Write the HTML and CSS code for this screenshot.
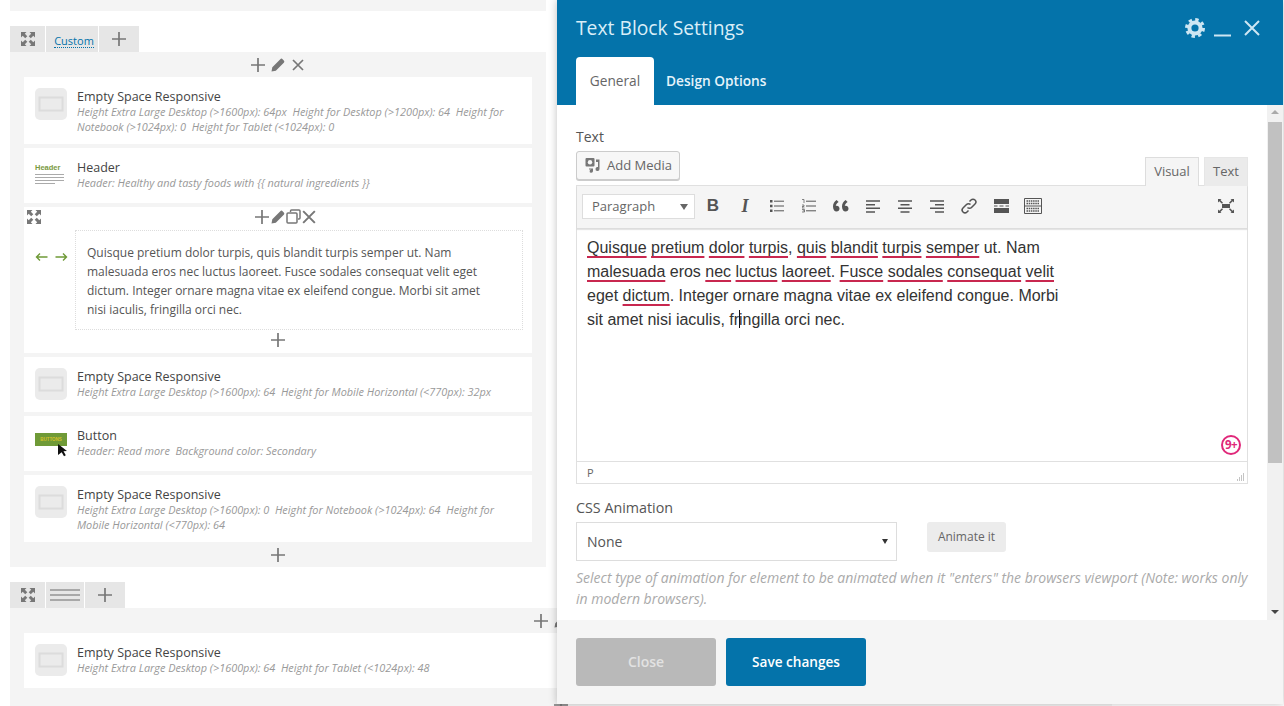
FILE: index.html
```html
<!DOCTYPE html>
<html lang="en">
<head>
<meta charset="utf-8">
<title>Text Block Settings</title>
<link rel="stylesheet" href="styles.css">
</head>
<body>
<svg class="defs" width="0" height="0" aria-hidden="true">
  <defs>
    <symbol id="expand" viewBox="0 0 14 14">
      <path d="M0 0h5.500L3.800 1.700 6.300 4.200 4.200 6.300 1.700 3.800 0 5.500zM14 0v5.500l-1.700-1.700-2.500 2.500-2.100-2.100 2.500-2.500L8.500 0zM0 14V8.500l1.700 1.700 2.500-2.500 2.100 2.100-2.500 2.500L5.500 14zM14 14H8.500l1.700-1.700-2.500-2.500 2.100-2.100 2.500 2.500L14 8.500z" fill="currentColor"/>
    </symbol>
    <symbol id="plus" viewBox="0 0 16 16">
      <path d="M8 1v14M1 8h14" stroke="currentColor" stroke-width="1.700" fill="none"/>
    </symbol>
    <symbol id="pencil" viewBox="0 0 14 14">
      <path d="M.5 13.500l.8-4.300L9.300 1.200a1.600 1.600 0 0 1 2.300 0l1.200 1.200a1.600 1.600 0 0 1 0 2.300L4.800 12.700z" fill="currentColor"/>
    </symbol>
    <symbol id="cross" viewBox="0 0 12 12">
      <path d="M1 1l10 10M11 1L1 11" stroke="currentColor" stroke-width="1.700" fill="none"/>
    </symbol>
    <symbol id="clone" viewBox="0 0 15 15">
      <path d="M4.500 3V2a1 1 0 0 1 1-1h7.500a1 1 0 0 1 1 1v7a1 1 0 0 1-1 1h-1M2 4h8a1 1 0 0 1 1 1v8a1 1 0 0 1-1 1H2a1 1 0 0 1-1-1V5a1 1 0 0 1 1-1z" stroke="currentColor" stroke-width="1.500" fill="none"/>
    </symbol>
    <symbol id="empty" viewBox="0 0 32 32">
      <rect width="32" height="32" rx="5" fill="#ebebeb"/>
      <rect x="4.500" y="9.500" width="23" height="13" fill="none" stroke="#dcdcdc" stroke-width="2"/>
    </symbol>
  </defs>
</svg>

<main class="builder">
  <div class="strip"></div>

  <section class="row-block">
    <div class="tabs">
      <span class="tab tab-icon"><svg class="ico14"><use href="#expand"/></svg></span>
      <span class="tab tab-custom"><span class="custom-link">Custom</span></span>
      <span class="tab tab-plus"><svg class="ico16"><use href="#plus"/></svg></span>
    </div>
    <div class="panel">
      <div class="controls">
        <svg class="ico16"><use href="#plus"/></svg>
        <svg class="ico14"><use href="#pencil"/></svg>
        <svg class="ico12"><use href="#cross"/></svg>
      </div>

      <article class="card card-tall">
        <svg class="thumb"><use href="#empty"/></svg>
        <div class="info">
          <h3>Empty Space Responsive</h3>
          <p>Height Extra Large Desktop (&gt;1600px): 64px&nbsp; Height for Desktop (&gt;1200px): 64&nbsp; Height for Notebook (&gt;1024px): 0&nbsp; Height for Tablet (&lt;1024px): 0</p>
        </div>
      </article>

      <article class="card card-short">
        <div class="thumb thumb-header">
          <span>Header</span><i></i><i></i><i></i><i></i>
        </div>
        <div class="info">
          <h3>Header</h3>
          <p>Header: Healthy and tasty foods with {{ natural ingredients }}</p>
        </div>
      </article>

      <article class="active-card">
        <div class="active-top">
          <svg class="ico14 expand-active"><use href="#expand"/></svg>
          <div class="active-tools">
            <svg class="ico16"><use href="#plus"/></svg>
            <svg class="ico14"><use href="#pencil"/></svg>
            <svg class="ico15"><use href="#clone"/></svg>
            <svg class="ico14"><use href="#cross"/></svg>
          </div>
        </div>
        <div class="active-body">
          <div class="arrows">
            <svg width="13" height="10" viewBox="0 0 13 10"><path d="M12.500 5H1.500M5 1.500L1.500 5 5 8.500" stroke="#6f9a37" stroke-width="1.400" fill="none"/></svg>
            <svg width="13" height="10" viewBox="0 0 13 10"><path d="M.5 5h11M8 1.500L11.500 5 8 8.500" stroke="#6f9a37" stroke-width="1.400" fill="none"/></svg>
          </div>
          <div class="active-text">Quisque pretium dolor turpis, quis blandit turpis semper ut. Nam malesuada eros nec luctus laoreet. Fusce sodales consequat velit eget dictum. Integer ornare magna vitae ex eleifend congue. Morbi sit amet nisi iaculis, fringilla orci nec.</div>
        </div>
        <div class="active-add"><svg class="ico16"><use href="#plus"/></svg></div>
      </article>

      <article class="card card-short">
        <svg class="thumb"><use href="#empty"/></svg>
        <div class="info">
          <h3>Empty Space Responsive</h3>
          <p>Height Extra Large Desktop (&gt;1600px): 64&nbsp; Height for Mobile Horizontal (&lt;770px): 32px</p>
        </div>
      </article>

      <article class="card card-short">
        <div class="thumb thumb-button">
          <span class="btn-pic">BUTTONS</span>
          <svg class="cursor" width="11" height="13" viewBox="0 0 11 13"><path d="M1 0l9 7-3.500.3 2.300 4-1.800 1-2.300-4L1 11z" fill="#111"/></svg>
        </div>
        <div class="info">
          <h3>Button</h3>
          <p>Header: Read more&nbsp; Background color: Secondary</p>
        </div>
      </article>

      <article class="card card-tall last-card">
        <svg class="thumb"><use href="#empty"/></svg>
        <div class="info">
          <h3>Empty Space Responsive</h3>
          <p>Height Extra Large Desktop (&gt;1600px): 0&nbsp; Height for Notebook (&gt;1024px): 64&nbsp; Height for Mobile Horizontal (&lt;770px): 64</p>
        </div>
      </article>

      <div class="panel-add"><svg class="ico16"><use href="#plus"/></svg></div>
    </div>
  </section>

  <section class="row-block row-wide">
    <div class="tabs">
      <span class="tab tab-icon"><svg class="ico14"><use href="#expand"/></svg></span>
      <span class="tab tab-lines"><i></i><i></i><i></i></span>
      <span class="tab tab-plus"><svg class="ico16"><use href="#plus"/></svg></span>
    </div>
    <div class="panel">
      <div class="controls">
        <svg class="ico16"><use href="#plus"/></svg>
        <svg class="ico14"><use href="#pencil"/></svg>
        <svg class="ico12"><use href="#cross"/></svg>
      </div>
      <article class="card card-short">
        <svg class="thumb"><use href="#empty"/></svg>
        <div class="info">
          <h3>Empty Space Responsive</h3>
          <p>Height Extra Large Desktop (&gt;1600px): 64&nbsp; Height for Tablet (&lt;1024px): 48</p>
        </div>
      </article>
      <div class="panel-add"><svg class="ico16"><use href="#plus"/></svg></div>
    </div>
  </section>
</main>

<aside class="modal">
  <header class="modal-head">
    <div class="title-row">
      <h1>Text Block Settings</h1>
      <div class="head-icons">
        <svg width="22" height="22" viewBox="0 0 22 22"><circle cx="11" cy="11" r="5.600" fill="none" stroke="#cde6f3" stroke-width="4"/><circle cx="11" cy="11" r="8.500" fill="none" stroke="#cde6f3" stroke-width="3" stroke-dasharray="3.400 3.270"/></svg>
        <svg width="17" height="22" viewBox="0 0 17 22"><path d="M0 18.500h17" stroke="#cde6f3" stroke-width="2"/></svg>
        <svg class="head-close" width="16" height="22" viewBox="0 0 16 22"><path d="M1 4l14 14M15 4L1 18" stroke="#cde6f3" stroke-width="2"/></svg>
      </div>
    </div>
    <nav class="modal-tabs">
      <span class="mtab mtab-on">General</span>
      <span class="mtab">Design Options</span>
    </nav>
  </header>

  <div class="modal-body">
    <div class="form">
      <label class="field-label">Text</label>
      <div class="media-row">
        <span class="media-btn">
          <svg width="16" height="16" viewBox="0 0 16 16"><path d="M1.500 1h7a1 1 0 0 1 1 1v6.500a1 1 0 0 1-1 1h-7a1 1 0 0 1-1-1V2a1 1 0 0 1 1-1z" fill="#777"/><circle cx="5" cy="5.200" r="2.200" fill="#f7f7f7"/><path d="M11 2.500h3.500v9.500a2 2 0 1 1-1.500-1.900V5H11zM4 11.500h4v2.600a1.700 1.700 0 1 1-1.400-1.600V12.500H4z" fill="#777"/></svg>
          Add Media
        </span>
        <div class="editor-tabs">
          <span class="etab etab-on">Visual</span>
          <span class="etab">Text</span>
        </div>
      </div>
      <div class="editor">
        <div class="toolbar">
          <span class="format">Paragraph<b class="caret-down"></b></span>
          <span class="tool tool-b">B</span>
          <span class="tool tool-i">I</span>
          <span class="tool"><svg width="14" height="14" viewBox="0 0 14 14"><path d="M0 1h2.500v2.500H0zM0 5.800h2.500v2.500H0zM0 10.500h2.500V13H0z" fill="#555"/><path d="M4 2.200h10M4 7h10M4 11.800h10" stroke="#555" stroke-width="1"/></svg></span>
          <span class="tool"><svg width="14" height="14" viewBox="0 0 14 14"><path d="M0 .5h2v3.500M0 6h2v1.500H0V9h2.500M0 10.500h2.500V13H0M.8 11.800h1.700" stroke="#555" stroke-width=".7" fill="none"/><path d="M4 2.200h10M4 7h10M4 11.800h10" stroke="#555" stroke-width="1"/></svg></span>
          <span class="tool"><svg width="16" height="12" viewBox="0 0 16 12"><path d="M3.600 0C1.400 1.400 0 3.600 0 6.500 0 9.600 1.500 11.500 3.500 11.500c1.800 0 3-1.300 3-3s-1.200-2.800-2.800-2.800c-.4 0-.7.100-.9.200.2-1.700 1.300-3 2.800-4zM12.600 0C10.400 1.400 9 3.600 9 6.500c0 3.100 1.500 5 3.500 5 1.800 0 3-1.300 3-3s-1.200-2.800-2.800-2.800c-.4 0-.7.100-.9.200.2-1.700 1.300-3 2.800-4z" fill="#555"/></svg></span>
          <span class="tool"><svg width="14" height="13" viewBox="0 0 14 13"><path d="M0 1h14M0 4.700h9M0 8.300h14M0 12h9" stroke="#555" stroke-width="1.400"/></svg></span>
          <span class="tool"><svg width="14" height="13" viewBox="0 0 14 13"><path d="M0 1h14M2.500 4.700h9M0 8.300h14M2.500 12h9" stroke="#555" stroke-width="1.400"/></svg></span>
          <span class="tool"><svg width="14" height="13" viewBox="0 0 14 13"><path d="M0 1h14M5 4.700h9M0 8.300h14M5 12h9" stroke="#555" stroke-width="1.400"/></svg></span>
          <span class="tool"><svg width="16" height="16" viewBox="0 0 16 16"><path d="M6.500 9.500a2.800 2.800 0 0 0 4 0l3.500-3.500a2.800 2.800 0 0 0-4-4L8.500 3.500M9.500 6.500a2.800 2.800 0 0 0-4 0L2 10a2.800 2.800 0 0 0 4 4l1.500-1.500" stroke="#555" stroke-width="1.500" fill="none"/></svg></span>
          <span class="tool"><svg width="15" height="14" viewBox="0 0 15 14"><path d="M0 0h15v5H0zM0 9h15v5H0z" fill="#555"/><path d="M0 7h3.500M5.500 7h4M11.500 7H15" stroke="#555" stroke-width="1.200"/></svg></span>
          <span class="tool"><svg width="18" height="16" viewBox="0 0 18 16"><path d="M.5.5h17v15H.5zM.5 8h17" stroke="#555" fill="none"/><path d="M2.500 3h13M2.500 5.500h13M2.500 10.500h13M2.500 13h13" stroke="#555" stroke-width="1.300" stroke-dasharray="1.500 .7"/></svg></span>
          <span class="tool tool-full"><svg width="16" height="14" viewBox="0 0 16 14"><path d="M4 5h8v4H4z" fill="#555"/><path d="M0 0h3.500L2.400 1.100 5 3.800 4 4.800 1.300 2.200 0 3.500zM16 0v3.500l-1.300-1.300L12 4.800l-1-1 2.600-2.700L12.500 0zM0 14v-3.500l1.300 1.300L4 9.200l1 1-2.600 2.700L3.500 14zM16 14h-3.500l1.100-1.100L11 10.200l1-1 2.700 2.600 1.300-1.300z" fill="#555"/></svg></span>
        </div>
        <div class="editor-area">
          <div class="editor-text"><span class="sp">Quisque</span> <span class="sp">pretium</span> <span class="sp">dolor</span> <span class="sp">turpis</span>, <span class="sp">quis</span> <span class="sp">blandit</span> <span class="sp">turpis</span> <span class="sp">semper</span> ut. Nam <span class="sp">malesuada</span> eros <span class="sp">nec</span> <span class="sp">luctus</span> <span class="sp">laoreet</span>. <span class="sp">Fusce</span> <span class="sp">sodales</span> <span class="sp">consequat</span> <span class="sp">velit</span> eget <span class="sp">dictum</span>. Integer ornare magna vitae ex eleifend congue. Morbi sit amet nisi iaculis, fr<span class="text-caret"></span>ingilla orci nec.</div>
          <span class="badge">9+</span>
        </div>
        <div class="statusbar">
          <span>p</span>
          <svg width="10" height="10" viewBox="0 0 10 10"><path d="M8.500 1.500v7M6.500 3.500v5M4.500 5.500v3M2.500 7.500v1" stroke="#888" stroke-width="1" stroke-dasharray="1 1" fill="none"/></svg>
        </div>
      </div>

      <label class="field-label label-anim">CSS Animation</label>
      <div class="anim-row">
        <span class="anim-select">None<b class="caret-down caret-dark"></b></span>
        <span class="anim-btn">Animate it</span>
      </div>
      <p class="help">Select type of animation for element to be animated when it "enters" the browsers viewport (Note: works only in modern browsers).</p>
    </div>
    <div class="scrollbar">
      <b class="sb-up"></b>
      <span class="sb-thumb"></span>
      <b class="sb-down"></b>
    </div>
  </div>

  <footer class="modal-foot">
    <span class="btn btn-close">Close</span>
    <span class="btn btn-save">Save changes</span>
  </footer>
</aside>
</body>
</html>
```
FILE: styles.css
```css
* { box-sizing: border-box; }
html, body { margin: 0; height: 706px; overflow: hidden; background: #fff; }
body { font-family: "Open Sans", sans-serif; color: #444; }
.defs { position: absolute; }
svg { display: block; flex: none; }
.ico12 { width: 12px; height: 12px; }
.ico14 { width: 14px; height: 14px; }
.ico15 { width: 15px; height: 15px; }
.ico16 { width: 16px; height: 16px; }

/* builder */
.builder { padding-left: 10px; width: 1284px; color: #777; }
.strip { width: 536px; height: 11px; background: #f4f4f4; margin-bottom: 15px; }
.row-block { width: 536px; margin-bottom: 15px; }
.row-wide { width: 1102px; }
.tabs { display: flex; gap: 1px; height: 26px; }
.tab { display: flex; align-items: center; justify-content: center; background: #e6e6e6; color: #777; }
.tab-icon { width: 35px; }
.tab-custom { width: 52px; padding-left: 4px; }
.tab-plus { width: 40px; }
.tab-lines { width: 38px; flex-direction: column; gap: 3px; }
.tab-lines i { display: block; width: 30px; height: 2px; background: #a8a8a8; }
.custom-link { font-size: 11px; color: #0473aa; border-bottom: 1px dotted #0473aa; line-height: 13px; margin-top: 3px; }
.panel { background: #f4f4f4; padding: 0 14px; }
.controls { height: 25px; display: flex; align-items: center; justify-content: center; gap: 5px; padding-right: 2px; color: #777; }
.controls .ico12 { margin-left: 2px; }
.card { display: flex; align-items: flex-start; background: #fff; padding: 11px 11px 0; margin-bottom: 4px; }
.card-tall { height: 67px; }
.card-short { height: 55px; }
.thumb { width: 32px; height: 32px; margin-right: 10px; flex: none; }
.info { flex: 1; min-width: 0; }
.info h3 { margin: 0; height: 16px; font-size: 12.500px; line-height: 17px; font-weight: 500; color: #444; }
.info p { margin: 0; font-size: 10.900px; line-height: 15px; font-style: italic; color: #999; }
.thumb-header { padding-top: 5px; }
.thumb-header span { display: block; font: bold 7.500px/8px "Liberation Sans", sans-serif; color: #7a9a3f; margin-bottom: 1px; }
.thumb-header i { display: block; width: 29px; height: 1px; background: #aaa; margin-top: 2px; }
.thumb-header i:last-child { width: 20px; }
.thumb-button { position: relative; padding-top: 6px; }
.btn-pic { display: block; height: 13px; background: #6f9a37; color: #d4c22a; font: bold 4.500px/13px "Liberation Sans", sans-serif; text-align: center; }
.cursor { position: absolute; left: 22px; top: 17px; }
.active-card { background: #fff; margin-bottom: 4px; height: 146px; padding-left: 3px; }
.active-top { height: 23px; padding: 0 0 4px 10px; position: relative; display: flex; justify-content: center; align-items: center; }
.expand-active { position: absolute; left: 0; top: 3px; }
.active-tools { display: flex; gap: 1px; align-items: center; color: #777; }
.active-body { display: flex; align-items: flex-start; }
.arrows { width: 48px; display: flex; justify-content: center; gap: 7px; padding: 22px 0 0 0; flex: none; }
.active-text { width: 448px; height: 100px; padding: 12px 21px 12px 11px; border: 1px dotted #ddd; font-size: 12px; line-height: 19px; color: #555; }
.active-add { display: flex; justify-content: center; margin-left: -3px; padding-top: 2px; color: #777; }
.last-card { margin-bottom: 0; }
.panel-add { display: flex; justify-content: center; height: 25px; align-items: center; color: #777; }

/* modal */
.modal { position: absolute; left: 557px; top: 0; width: 726px; height: 704px; display: flex; flex-direction: column; background: #fff; box-shadow: 0 0 8px rgba(0, 0, 0, .25); }
.modal-head { background: #0473aa; height: 105px; padding: 0 19px; flex: none; }
.title-row { height: 57px; display: flex; justify-content: space-between; align-items: center; padding-bottom: 2px; }
.title-row h1 { margin: 0; font-size: 19.300px; font-weight: 400; color: #d9eef8; }
.head-icons { display: flex; gap: 8px; align-items: center; margin: 1px 4px 0 0; }
.head-close { margin-left: 5px; }
.modal-tabs { display: flex; height: 48px; }
.mtab { padding: 0 12px; line-height: 48px; font-size: 13.700px; font-weight: 600; color: #e6f3fa; }
.mtab-on { width: 78px; padding: 0; text-align: center; font-weight: 400; background: #fff; color: #666; border-radius: 4px 4px 0 0; }
.modal-body { flex: 1; display: flex; min-height: 0; }
.form { flex: 1; padding: 22px 19px 0; min-width: 0; }
.field-label { display: block; font-size: 14px; line-height: 20px; color: #555; }
.media-row { display: flex; justify-content: space-between; align-items: flex-end; height: 34px; margin-top: 4px; }
.media-btn { display: flex; align-items: center; gap: 6px; width: 104px; height: 29px; margin-bottom: 5px; padding: 0 0 2px 8px; background: #f7f7f7; border: 1px solid #ccc; border-radius: 3px; font-size: 13px; color: #666; box-shadow: 0 1px 0 #ccc; }
.editor-tabs { display: flex; gap: 5px; margin-bottom: -1px; position: relative; }
.etab { height: 29px; width: 44px; text-align: center; line-height: 26px; font-size: 13px; color: #666; background: #ebebeb; border: 1px solid #e6e6e6; border-bottom: 0; }
.etab-on { width: 54px; background: #f5f5f5; border-color: #ddd; }
.editor { border: 1px solid #e0e0e0; }
.toolbar { height: 43px; background: #f5f5f5; display: flex; align-items: center; padding: 0 0 1px 5px; border-bottom: 1px solid #ddd; box-shadow: 0 1px 1px rgba(0, 0, 0, .1); position: relative; }
.format { width: 113px; height: 25px; margin-right: 2px; background: #fff; border: 1px solid #ddd; font-size: 13px; line-height: 23px; padding-left: 9px; color: #666; position: relative; }
.caret-down { position: absolute; right: 6px; top: 9px; border: 4px solid transparent; border-top: 6px solid #666; border-bottom: 0; }
.tool { width: 32px; height: 28px; margin-top: -1px; display: flex; align-items: center; justify-content: center; color: #555; }
.tool-b { font: bold 17px "Liberation Sans", sans-serif; }
.tool-i { font: italic bold 18px "Liberation Serif", serif; }
.tool-full { margin-left: auto; margin-right: 5px; }
.editor-area { height: 232px; position: relative; padding: 7px 10px; }
.editor-text { width: 480px; font: 16px/24px "Liberation Sans", Arial, sans-serif; color: #333; }
.sp { text-decoration: underline; text-decoration-color: #c8274f; text-decoration-thickness: 2px; text-underline-offset: 3px; text-decoration-skip-ink: none; }
.text-caret { display: inline-block; width: 1px; height: 18px; margin-right: -1px; background: #111; vertical-align: text-bottom; }
.badge { position: absolute; right: 6px; top: 206px; width: 20px; height: 20px; border: 2px solid #e0287a; border-radius: 50%; color: #e0287a; font-size: 11.500px; font-weight: 700; line-height: 15px; text-align: center; letter-spacing: -.5px; }
.statusbar { height: 22px; border-top: 1px solid #e0e0e0; display: flex; justify-content: space-between; align-items: center; padding: 0 2px 0 10px; font-size: 11px; color: #666; text-transform: uppercase; }
.statusbar svg { align-self: flex-end; margin-bottom: 1px; }
.label-anim { margin-top: 14px; font-size: 14.300px; font-weight: 500; }
.anim-row { display: flex; align-items: flex-start; gap: 30px; margin-top: 4px; }
.anim-select { width: 321px; height: 39px; border: 1px solid #ddd; font-size: 14px; line-height: 37px; padding-left: 10px; color: #555; position: relative; }
.caret-dark { top: 16px; right: 8px; border-width: 3px; border-top: 5px solid #333; border-bottom: 0; }
.anim-btn { width: 79px; height: 30px; background: #ececec; border-radius: 3px; font-size: 12px; line-height: 30px; text-align: center; color: #666; }
.help { margin: 6px 0 0; font-size: 14px; line-height: 21px; font-style: italic; color: #aaa; }
.scrollbar { width: 16px; flex: none; background: #f1f1f1; position: relative; display: flex; flex-direction: column; align-items: center; padding-top: 17px; }
.sb-thumb { width: 14px; height: 341px; background: #c1c1c1; }
.sb-up { position: absolute; top: 5px; border: 4px solid transparent; border-bottom: 4px solid #aaa; border-top: 0; }
.sb-down { position: absolute; bottom: 6px; border: 4px solid transparent; border-top: 4px solid #444; border-bottom: 0; }
.modal-foot { height: 84px; flex: none; background: #f5f5f5; display: flex; gap: 10px; padding: 18px 19px; }
.btn { width: 140px; height: 48px; border-radius: 3px; font-size: 14px; font-weight: 600; line-height: 48px; text-align: center; }
.btn-close { background: #b9b9b9; color: #e2e2e2; }
.btn-save { background: #0473aa; color: #fff; font-size: 13.600px; }
```
